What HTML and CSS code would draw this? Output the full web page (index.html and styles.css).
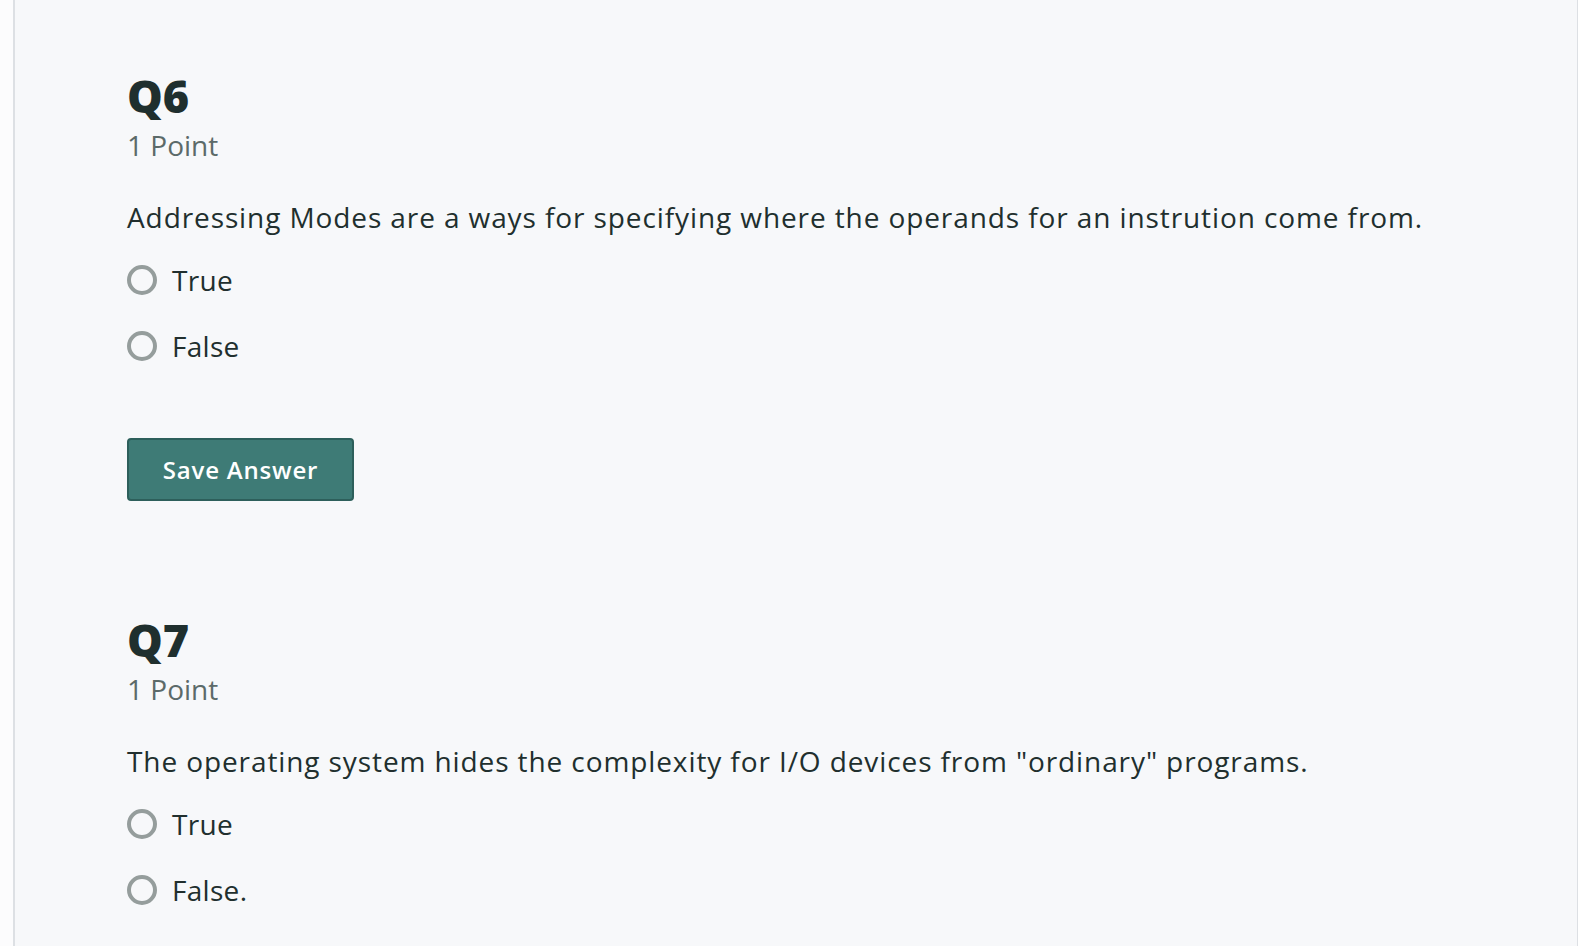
FILE: index.html
```html
<!DOCTYPE html>
<html lang="en">
<head>
<meta charset="utf-8">
<title>Quiz</title>
<link rel="stylesheet" href="styles.css">
</head>
<body>
<div class="page">
  <div class="gutter"></div>
  <main class="main">
    <section class="question">
      <h2 class="q-title">Q6</h2>
      <div class="q-points">1 Point</div>
      <p class="q-text">Addressing Modes are a ways for specifying where the operands for an instrution come from.</p>
      <label class="option"><span class="radio"></span><span class="opt-label">True</span></label>
      <label class="option"><span class="radio"></span><span class="opt-label">False</span></label>
      <button class="save-btn" type="button">Save Answer</button>
    </section>
    <section class="question">
      <h2 class="q-title">Q7</h2>
      <div class="q-points">1 Point</div>
      <p class="q-text">The operating system hides the complexity for I/O devices from "ordinary" programs.</p>
      <label class="option"><span class="radio"></span><span class="opt-label">True</span></label>
      <label class="option"><span class="radio"></span><span class="opt-label">False.</span></label>
    </section>
  </main>
</div>
</body>
</html>
```

FILE: styles.css
```css
html, body {
  margin: 0;
  padding: 0;
  height: 100%;
  overflow: hidden;
}
body {
  font-family: "Open Sans", "Lato", "Liberation Sans", sans-serif;
  color: #212f2e;
  background: #fcfcfd;
}
.page {
  display: flex;
  height: 946px;
}
.gutter {
  width: 13px;
  flex: none;
  background: #fcfcfd;
}
.main {
  flex: 1;
  background: #f7f8fa;
  border-left: 2px solid #dde0e4;
  border-right: 1px solid #dde0e4;
  padding: 64px 0 0 112px;
}
.question {
  display: flex;
  flex-direction: column;
  align-items: flex-start;
}
.question + .question {
  margin-top: 107px;
}
.q-title {
  margin: 0;
  font-size: 45px;
  font-weight: 800;
  line-height: 64px;
  color: #1f2f2e;
}
.q-points {
  font-size: 28px;
  line-height: 34px;
  color: #5c6a69;
}
.q-text {
  margin: 36px 0 0;
  font-size: 28px;
  line-height: 38px;
  letter-spacing: 0.9px;
}
.option {
  display: flex;
  align-items: center;
  gap: 15px;
  height: 66px;
}
.q-text + .option {
  margin-top: 11px;
}
.radio {
  width: 22px;
  height: 22px;
  border: 4px solid #959d9c;
  border-radius: 50%;
  background: #f7f8fa;
}
.opt-label {
  font-size: 28px;
  letter-spacing: 0.3px;
}
.save-btn {
  margin-top: 59px;
  width: 227px;
  height: 63px;
  background: #3e7b76;
  border: 2px solid #2d5f5b;
  border-radius: 4px;
  color: #ffffff;
  font-family: "Open Sans", "Lato", "Liberation Sans", sans-serif;
  font-size: 24px;
  font-weight: 600;
  letter-spacing: 0.8px;
  padding: 0;
}
```
